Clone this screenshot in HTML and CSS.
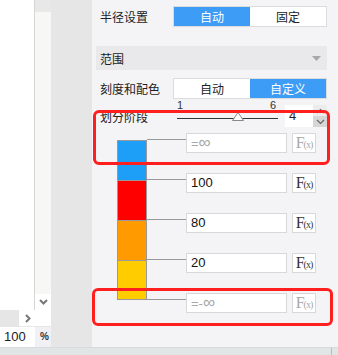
FILE: index.html
```html
<!DOCTYPE html>
<html lang="zh-CN">
<head>
  <meta charset="UTF-8" />
  <title>范围设置</title>
  <link rel="stylesheet" href="styles.css">
</head>
<body>
  <div class="app">
    <div class="main">
      <div class="left">
        <div class="left-top">
          <div class="canvas"></div>
          <div class="vscroll">
            <div class="vs-top"></div>
            <div class="vs-fill"></div>
            <div class="vs-btn">
              <svg width="9" height="6" viewBox="0 0 9 6"><polyline points="1,1 4.5,4.5 8,1" fill="none" stroke="#777" stroke-width="2"/></svg>
            </div>
          </div>
        </div>
        <div class="hscroll">
          <div class="hs-fill"></div>
          <div class="hs-btn">
            <svg width="6" height="9" viewBox="0 0 6 9"><polyline points="1,1 4.5,4.5 1,8" fill="none" stroke="#777" stroke-width="2"/></svg>
          </div>
        </div>
        <div class="zoom-row">
          <div class="zoom-input">100</div>
          <div class="zoom-unit">%</div>
        </div>
      </div>

      <div class="panel">
        <div class="row">
          <div class="row-label">半径设置</div>
          <div class="seg"><span class="on">自动</span><span>固定</span></div>
        </div>

        <div class="section-head">
          <span>范围</span>
          <svg width="9" height="5" viewBox="0 0 9 5"><polygon points="0,0 9,0 4.5,5" fill="#a8a8a8"/></svg>
        </div>

        <div class="row row-scale">
          <div class="row-label">刻度和配色</div>
          <div class="seg"><span>自动</span><span class="on">自定义</span></div>
        </div>

        <div class="row row-steps">
          <div class="row-label">划分阶段</div>
          <div class="slider">
            <div class="slider-labels"><span>1</span><span>6</span></div>
            <div class="slider-track">
              <svg class="thumb" width="12" height="9" viewBox="0 0 12 9"><polygon points="6,0.5 11.5,8.5 0.5,8.5" fill="#fff" stroke="#888" stroke-width="1"/></svg>
            </div>
          </div>
          <div class="num">
            <div class="num-val">4</div>
            <div class="num-spin">
              <div class="spin-up"><svg width="9" height="6" viewBox="0 0 9 6"><polyline points="1,5 4.5,1.5 8,5" fill="none" stroke="#666" stroke-width="1.2"/></svg></div>
              <div class="spin-down"><svg width="9" height="6" viewBox="0 0 9 6"><polyline points="1,1 4.5,4.5 8,1" fill="none" stroke="#666" stroke-width="1.2"/></svg></div>
            </div>
          </div>
        </div>

        <div class="scale">
          <div class="bar">
            <div class="bar-seg blue"></div>
            <div class="bar-seg red"></div>
            <div class="bar-seg orange"></div>
            <div class="bar-seg yellow"></div>
          </div>
          <div class="stops">
            <div class="stop">
              <div class="stop-line"></div>
              <div class="stop-input muted">=<span class="inf">∞</span></div>
              <div class="fx muted">F<small>(x)</small></div>
            </div>
            <div class="stop">
              <div class="stop-line"></div>
              <div class="stop-input">100</div>
              <div class="fx">F<small>(x)</small></div>
            </div>
            <div class="stop">
              <div class="stop-line"></div>
              <div class="stop-input">80</div>
              <div class="fx">F<small>(x)</small></div>
            </div>
            <div class="stop">
              <div class="stop-line"></div>
              <div class="stop-input">20</div>
              <div class="fx">F<small>(x)</small></div>
            </div>
            <div class="stop">
              <div class="stop-line"></div>
              <div class="stop-input muted">=-<span class="inf">∞</span></div>
              <div class="fx muted">F<small>(x)</small></div>
            </div>
          </div>
        </div>
      </div>
    </div>
    <div class="statusbar"><div class="status-sep"></div></div>
  </div>

  <div class="mark mark-top"></div>
  <div class="mark mark-bottom"></div>
</body>
</html>
```

FILE: styles.css
```css
* {
  box-sizing: border-box;
}

body {
  margin: 0;
  width: 338px;
  height: 355px;
  overflow: hidden;
  position: relative;
  font-family: "Noto Sans CJK SC", "Liberation Sans", sans-serif;
  font-size: 12px;
  color: #222;
  background: #e6e6e6;
}

.app {
  display: flex;
  flex-direction: column;
  height: 355px;
}

.main {
  display: flex;
  height: 347px;
}

/* left: canvas with scrollbars */
.left {
  width: 92px;
  background: #e6e6e6;
  display: flex;
  flex-direction: column;
}

.left-top {
  display: flex;
  width: 51px;
  height: 310px;
}

.canvas {
  width: 35px;
  background: #fff;
  border-right: 1px solid #d6d6d6;
}

.vscroll {
  width: 16px;
  background: #f7f7f6;
  display: flex;
  flex-direction: column;
}

.vs-top {
  height: 12px;
  background: #e8e8e8;
}

.vs-fill {
  flex: 1;
}

.vs-btn,
.hs-btn {
  background: #fff;
  display: flex;
  align-items: center;
  justify-content: center;
}

.vs-btn {
  height: 16px;
}

.hscroll {
  display: flex;
  width: 51px;
  height: 16px;
}

.hs-fill {
  width: 19px;
}

.hs-btn {
  flex: 1;
  justify-content: flex-start;
  padding-left: 6px;
}

.zoom-row {
  display: flex;
  width: 51px;
  height: 20px;
  margin-top: 1px;
  background: #f1f1f5;
}

.zoom-input {
  width: 35px;
  background: #fff;
  font-family: "Liberation Sans", sans-serif;
  font-size: 13px;
  line-height: 19px;
  padding-left: 4px;
}

.zoom-unit {
  flex: 1;
  font-family: "Liberation Sans", sans-serif;
  font-size: 10px;
  font-weight: bold;
  line-height: 19px;
  padding-left: 5px;
  color: #333;
}

/* right: settings panel */
.panel {
  flex: 1;
  background: #f4f4f6;
  padding: 6px 11px 0 8px;
}

.row {
  display: flex;
  align-items: center;
  height: 21px;
}

.row-label {
  width: 73px;
  flex-shrink: 0;
}

.seg {
  display: flex;
  width: 154px;
  height: 21px;
  border: 1px solid #dcdcdc;
  background: #fff;
}

.seg span {
  flex: 1;
  text-align: center;
  line-height: 19px;
}

.seg .on {
  background: #3d9cf5;
  color: #fff;
}

.section-head {
  margin: 19px 0 0 -4px;
  height: 24px;
  background: #e9e9eb;
  padding: 0 6px 0 4px;
  display: flex;
  align-items: center;
  justify-content: space-between;
}

.row-scale {
  margin-top: 8px;
}

.row-steps {
  margin-top: 6px;
  height: 22px;
}

.slider {
  width: 101px;
  margin-left: 4px;
  align-self: flex-start;
  margin-top: -6px;
}

.slider-labels {
  display: flex;
  justify-content: space-between;
  font-family: "Liberation Sans", sans-serif;
  font-size: 11px;
  line-height: 12px;
  height: 12px;
  padding-right: 2px;
  color: #333;
}

.slider-track {
  position: relative;
  height: 1px;
  background: #333;
  margin-top: 7px;
}

.thumb {
  position: absolute;
  left: 55px;
  top: -6px;
}

.num {
  display: flex;
  margin-left: 7px;
  height: 22px;
}

.num-val {
  width: 28px;
  background: #fff;
  font-family: "Liberation Sans", sans-serif;
  font-size: 13px;
  line-height: 22px;
  padding-left: 4px;
}

.num-spin {
  width: 14px;
  display: flex;
  flex-direction: column;
}

.spin-up,
.spin-down {
  flex: 1;
  display: flex;
  align-items: center;
  justify-content: center;
}

.spin-up {
  background: #ececec;
}

.spin-down {
  background: #d6d6d6;
}

/* colour scale */
.scale {
  display: flex;
  margin-top: 6px;
  padding-left: 17px;
}

.bar {
  width: 30px;
  margin-top: 7px;
  border: 1px solid #999;
  align-self: flex-start;
}

.bar-seg {
  height: 40px;
  border-top: 1px solid #999;
}

.bar-seg:first-child {
  height: 39px;
  border-top: none;
}

.bar-seg:last-child {
  height: 39px;
}

.blue { background: #1e9ff7; }
.red { background: #ff0000; }
.orange { background: #ff9a00; }
.yellow { background: #ffcc00; }

.stops {
  display: flex;
  flex-direction: column;
  gap: 20px;
}

.stop {
  display: flex;
  height: 20px;
}

.stop-line {
  width: 39px;
  margin-top: 6px;
  height: 1px;
  background: #999;
}

.stop-input {
  width: 101px;
  background: #fff;
  border: 1px solid #d8d8d8;
  font-family: "Liberation Sans", sans-serif;
  font-size: 13px;
  line-height: 18px;
  padding-left: 4px;
  color: #111;
}

.stop-input .inf {
  font-size: 17px;
  letter-spacing: -1px;
}

.fx {
  width: 24px;
  margin-left: 5px;
  background: #fff;
  border: 1px solid #d8d8d8;
  font-family: "Liberation Serif", serif;
  font-size: 16px;
  line-height: 18px;
  text-align: center;
  color: #333;
  letter-spacing: -1px;
}

.fx small {
  font-size: 10px;
}

.muted {
  color: #a8a8a8;
}

.statusbar {
  height: 8px;
  background: #e2e5e5;
  border-top: 1px solid #d8dcdc;
  position: relative;
}

.status-sep {
  margin-left: 331px;
  width: 1px;
  height: 100%;
  background: #b8bcbc;
}

/* red annotation frames drawn over the panel */
.mark {
  position: absolute;
  border: 3px solid #ff1f1f;
  border-radius: 6px;
}

.mark-top {
  left: 93px;
  top: 110px;
  width: 237px;
  height: 55px;
}

.mark-bottom {
  left: 92px;
  top: 288px;
  width: 241px;
  height: 38px;
}
```
